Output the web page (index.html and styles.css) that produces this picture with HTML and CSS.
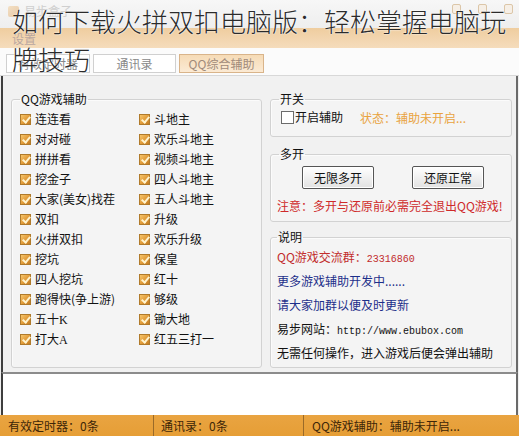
FILE: index.html
```html
<!DOCTYPE html>
<html lang="zh-CN">
<head>
<meta charset="utf-8">
<title>QQ综合辅助</title>
<link rel="stylesheet" href="styles.css">
</head>
<body>
<div class="window">
  <div class="titlebar">
    <span class="app-icon"></span><span class="app-title">易步盒子</span>
    <div class="winbtns"><span></span><span></span><span></span></div>
  </div>
  <div class="menubar"><span class="menu">设置</span></div>
  <div class="tabs">
    <div class="tab">有效定时器</div>
    <div class="tab">通讯录</div>
    <div class="tab active">QQ综合辅助</div>
  </div>
  <div class="main">
    <fieldset class="group games">
      <legend>QQ游戏辅助</legend>
      <div class="grid">
        <label class="chk"><i class="box on"></i><span>连连看</span></label>
        <label class="chk"><i class="box on"></i><span>斗地主</span></label>
        <label class="chk"><i class="box on"></i><span>对对碰</span></label>
        <label class="chk"><i class="box on"></i><span>欢乐斗地主</span></label>
        <label class="chk"><i class="box on"></i><span>拼拼看</span></label>
        <label class="chk"><i class="box on"></i><span>视频斗地主</span></label>
        <label class="chk"><i class="box on"></i><span>挖金子</span></label>
        <label class="chk"><i class="box on"></i><span>四人斗地主</span></label>
        <label class="chk"><i class="box on"></i><span>大家(美女)找茬</span></label>
        <label class="chk"><i class="box on"></i><span>五人斗地主</span></label>
        <label class="chk"><i class="box on"></i><span>双扣</span></label>
        <label class="chk"><i class="box on"></i><span>升级</span></label>
        <label class="chk"><i class="box on"></i><span>火拼双扣</span></label>
        <label class="chk"><i class="box on"></i><span>欢乐升级</span></label>
        <label class="chk"><i class="box on"></i><span>挖坑</span></label>
        <label class="chk"><i class="box on"></i><span>保皇</span></label>
        <label class="chk"><i class="box on"></i><span>四人挖坑</span></label>
        <label class="chk"><i class="box on"></i><span>红十</span></label>
        <label class="chk"><i class="box on"></i><span>跑得快(争上游)</span></label>
        <label class="chk"><i class="box on"></i><span>够级</span></label>
        <label class="chk"><i class="box on"></i><span>五十<b class="latin">K</b></span></label>
        <label class="chk"><i class="box on"></i><span>锄大地</span></label>
        <label class="chk"><i class="box on"></i><span>打大<b class="latin">A</b></span></label>
        <label class="chk"><i class="box on"></i><span>红五三打一</span></label>
      </div>
    </fieldset>
    <div class="right">
      <fieldset class="group switch">
        <legend>开关</legend>
        <div class="switch-row">
          <label class="chk plain"><i class="box off"></i><span>开启辅助</span></label>
          <span class="state">状态：辅助未开启...</span>
        </div>
      </fieldset>
      <fieldset class="group multi">
        <legend>多开</legend>
        <div class="btn-row">
          <button class="btn">无限多开</button>
          <button class="btn">还原正常</button>
        </div>
        <p class="notice">注意：多开与还原前必需完全退出QQ游戏!</p>
      </fieldset>
      <fieldset class="group info">
        <legend>说明</legend>
        <p class="line red">QQ游戏交流群：<span class="mono">23316860</span></p>
        <p class="line blue">更多游戏辅助开发中......</p>
        <p class="line blue">请大家加群以便及时更新</p>
        <p class="line">易步网站：<span class="mono">http://www.ebubox.com</span></p>
        <p class="line">无需任何操作，进入游戏后便会弹出辅助</p>
      </fieldset>
    </div>
  </div>
  <div class="log"></div>
  <div class="status">
    <span class="cell c1">有效定时器：0条</span>
    <span class="cell c2">通讯录：0条</span>
    <span class="cell c3">QQ游戏辅助：辅助未开启...</span>
  </div>
  <h1 class="overlay-title">如何下载火拼双扣电脑版：轻松掌握电脑玩<br>牌技巧</h1>
</div>
</body>
</html>
```

FILE: styles.css
```css
* { box-sizing: border-box; }
html, body { margin: 0; padding: 0; }
body {
  width: 519px;
  height: 436px;
  overflow: hidden;
  background: #f0f0f0;
  font-family: "Noto Sans CJK SC", "Liberation Sans", sans-serif;
  font-size: 12px;
  color: #111;
}
.window {
  position: relative;
  width: 519px;
  height: 436px;
  display: flex;
  flex-direction: column;
}

/* title bar */
.titlebar {
  height: 28px;
  flex: none;
  background: linear-gradient(#f7f7f7, #eeeeee);
  display: flex;
  align-items: center;
  padding: 0 8px;
  gap: 5px;
}
.app-icon {
  width: 11px;
  height: 11px;
  border-radius: 2px;
  background: linear-gradient(135deg, #f2d7b0, #e2b585);
  opacity: .7;
  margin-top: -6px;
}
.app-title {
  color: #cfcfcf;
  font-size: 12px;
  margin-top: -8px;
}
.winbtns {
  margin-left: auto;
  display: flex;
  gap: 17px;
  margin-top: -10px;
  margin-right: -2px;
}
.winbtns span {
  width: 9px;
  height: 10px;
  border: 1px solid #dcc6a8;
  border-radius: 2px;
  background: #f6efe6;
}

/* menu */
.menubar {
  height: 20px;
  flex: none;
  background: linear-gradient(#efcd9f, #f5dcbc);
  padding-left: 12px;
  display: flex;
  align-items: center;
}
.menu { color: #b9a6a0; font-size: 12px; }

/* tabs */
.tabs {
  height: 28px;
  flex: none;
  background: #fbfbfb;
  border-bottom: 1px solid #d8d8d8;
  display: flex;
  align-items: flex-start;
  padding: 6px 0 0 6px;
  gap: 3px;
}
.tab {
  width: 84px;
  height: 19px;
  border: 1px solid #d0d0d0;
  background: #ffffff;
  color: #888;
  text-align: center;
  line-height: 17px;
  font-size: 12px;
}
.tab:nth-child(2) { width: 83px; }
.tab.active {
  width: 85px;
  background: linear-gradient(#f6dbb6, #fbead4);
  border-color: #d9b48a;
  color: #a08a7a;
}

/* main area */
.main {
  height: 296px;
  flex: none;
  display: flex;
  gap: 8px;
  margin: 0 1px;
  border-left: 2px solid #3e3e3e;
  border-right: 2px solid #6a6a6a;
  padding: 16px 4px 0 8px;
  background: #f1f1f1;
}
.group {
  margin: 0;
  border: 1px solid #d2d2d2;
  border-radius: 3px;
  box-shadow: inset 1px 1px 0 #fbfbfb;
  background: #f4f4f4;
  min-width: 0;
}
.group legend {
  padding: 0 1px;
  margin-left: 0;
  line-height: 14px;
  font-size: 12px;
  color: #111;
}
.games {
  width: 251px;
  height: 276px;
  padding: 3px 0 0 8px;
}
.grid {
  display: grid;
  grid-template-columns: 119px 119px;
  grid-auto-rows: 20px;
}
.chk {
  display: flex;
  align-items: center;
  white-space: nowrap;
  line-height: 14px;
}
.latin { font-family: "Liberation Serif", serif; font-size: 12px; font-weight: normal; }
.box {
  position: relative;
  flex: none;
  width: 11px;
  height: 11px;
  display: block;
  margin-right: 4px;
}
.box.on {
  border: 1px solid #b07a2a;
  background: linear-gradient(135deg, #f7c56a 0%, #e09a38 55%, #c27b22 100%);
}
.box.on::after {
  content: "";
  position: absolute;
  left: 3px;
  top: 0px;
  width: 3px;
  height: 6px;
  border-right: 2px solid #fff3cc;
  border-bottom: 2px solid #fff3cc;
  transform: rotate(40deg);
}
.box.off {
  width: 13px;
  height: 13px;
  border: 1px solid #6b6b6b;
  background: #ffffff;
  margin-right: 1px;
}

.right {
  width: 242px;
  display: flex;
  flex-direction: column;
}
.switch {
  height: 45px;
  padding: 1px 0 0 10px;
}
.switch legend { margin-left: -2px; }
.switch-row {
  display: flex;
  align-items: center;
  height: 20px;
}
.state {
  margin-left: 17px;
  color: #e9a33e;
}
.multi {
  margin-top: 10px;
  height: 75px;
  padding: 5px 0 0 6px;
}
.multi legend { margin-left: 2px; }
.btn-row {
  display: flex;
  gap: 38px;
  padding-left: 25px;
}
.btn {
  width: 72px;
  height: 23px;
  padding: 0;
  font: inherit;
  font-size: 12px;
  color: #111;
  border: 1px solid #555;
  border-radius: 2px;
  background: linear-gradient(#ffffff, #f0f0f0 50%, #e2e2e2);
  box-shadow: inset 0 0 0 1px #ffffff;
}
.notice {
  margin: 10px 0 0 0;
  line-height: 14px;
  color: #cf2a2a;
  white-space: nowrap;
}
.info {
  margin-top: 8px;
  height: 138px;
  padding: 1px 0 0 6px;
}
.line {
  margin: 0;
  line-height: 24px;
  height: 24px;
  white-space: nowrap;
}
.line.red { color: #c22c2c; }
.line.blue { color: #1d2f8a; }
.mono {
  font-family: "Liberation Mono", monospace;
  font-size: 10px;
}

/* log */
.log {
  flex: none;
  height: 43px;
  margin: 0 1px;
  border-left: 2px solid #3e3e3e;
  border-right: 2px solid #6a6a6a;
  border-top: 2px solid #8c8c8c;
  background: #ffffff;
}

/* status bar */
.status {
  flex: 1;
  background: linear-gradient(#e9a441, #e69e36);
  display: flex;
  align-items: center;
  color: #3d2608;
  font-size: 12px;
}
.cell {
  height: 21px;
  line-height: 21px;
  white-space: nowrap;
}
.c1 { width: 153px; padding-left: 8px; }
.c2 { width: 150px; padding-left: 7px; border-left: 1px solid #9a6a28; }
.c3 { padding-left: 8px; border-left: 1px solid #9a6a28; }

/* overlay headline */
.overlay-title {
  position: absolute;
  left: 12px;
  top: 2px;
  margin: 0;
  font-family: "Noto Sans CJK SC", sans-serif;
  font-weight: 300;
  font-size: 26px;
  line-height: 38px;
  color: #2b2b2b;
  text-shadow: 0 0 2px rgba(255,255,255,.9), 0 0 1px #fff;
  white-space: nowrap;
}
```
